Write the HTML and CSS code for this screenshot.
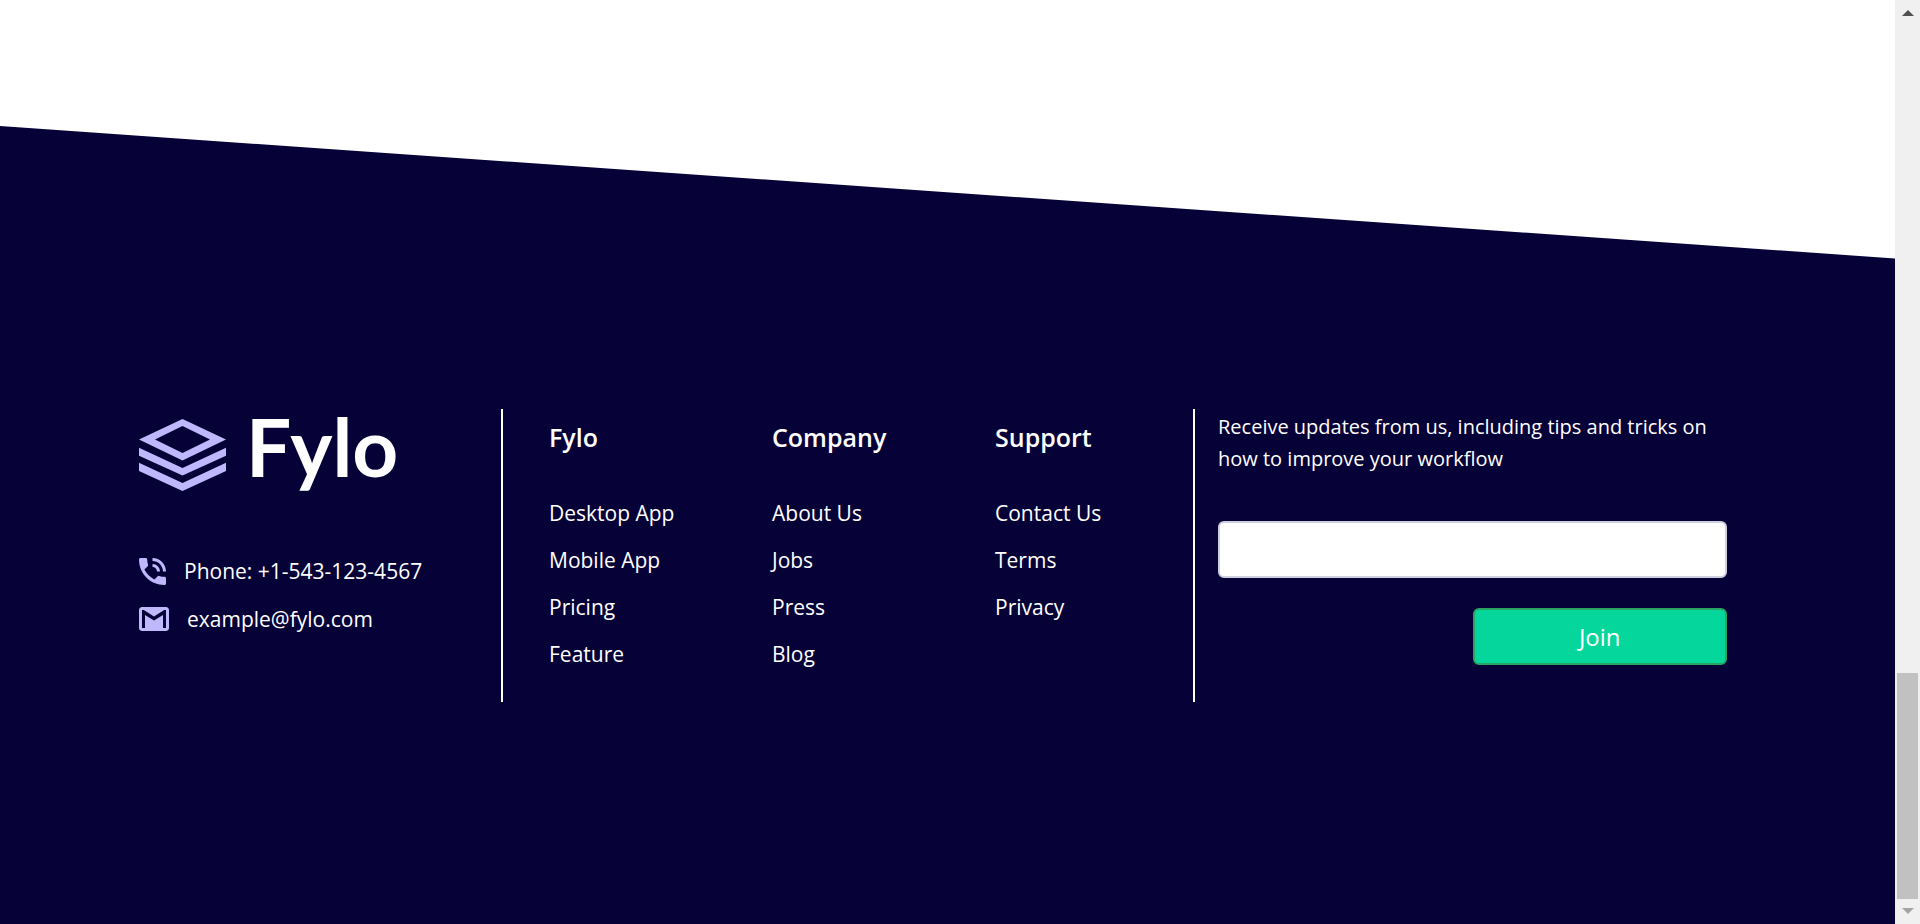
FILE: index.html
```html
<!DOCTYPE html>
<html lang="en">
<head>
<meta charset="utf-8">
<title>Fylo</title>
<link rel="stylesheet" href="styles.css">
</head>
<body>
<div class="page">
  <footer class="footer">
    <div class="footer-grid">
      <section class="brand">
        <div class="logo">
          <svg class="logo-mark" viewBox="0 0 87 72" aria-hidden="true">
            <path fill-rule="evenodd" d="M43.500 0L87 20.500 43.500 41.500 0 20.500zM43.500 7L16 20.500 43.500 34 71 20.500z"/>
            <path d="M0 28.700v8L43.500 56.500 87 36.700v-8L43.500 49zM0 43.700V52l43.500 20L87 52v-8.300L43.500 64z"/>
          </svg>
          <span class="logo-name">Fylo</span>
        </div>
        <p class="contact">
          <svg class="icon-phone" viewBox="0 0 27 27" aria-hidden="true">
            <path d="M25.500 18.800c-1.900 0-3.700-.3-5.300-.9-.5-.2-1.100 0-1.500.4l-3.300 3.300C11.100 19.400 7.600 15.900 5.400 11.600l3.300-3.300c.4-.4.500-1 .4-1.500C8.500 5.200 8.200 3.400 8.200 1.500 8.200.7 7.500 0 6.700 0H1.500C.7 0 0 .7 0 1.500 0 15.600 11.400 27 25.500 27c.8 0 1.500-.7 1.500-1.500v-5.200c0-.8-.7-1.500-1.500-1.500z"/>
            <path d="M24 13.500h3C27 6 21 0 13.500 0v3C19.300 3 24 7.700 24 13.500zM18 13.500h3c0-4.100-3.400-7.500-7.500-7.500v3c2.500 0 4.500 2 4.500 4.500z"/>
          </svg>
          <span>Phone: +1-543-123-4567</span>
        </p>
        <p class="contact">
          <svg class="icon-mail" viewBox="2 4 20 16" aria-hidden="true">
            <path fill-rule="evenodd" d="M20 4H4c-1.100 0-2 .9-2 2v12c0 1.100.9 2 2 2h16c1.100 0 2-.9 2-2V6c0-1.100-.9-2-2-2zM20 18h-2V9.250L12 13 6 9.250V18H4V6h1.200l6.800 4.250L18.800 6H20z"/>
          </svg>
          <span>example@fylo.com</span>
        </p>
      </section>
      <nav class="links" aria-label="Footer">
        <div>
          <h2 class="links-title">Fylo</h2>
          <ul class="links-list">
            <li><a href="#">Desktop App</a></li>
            <li><a href="#">Mobile App</a></li>
            <li><a href="#">Pricing</a></li>
            <li><a href="#">Feature</a></li>
          </ul>
        </div>
        <div>
          <h2 class="links-title">Company</h2>
          <ul class="links-list">
            <li><a href="#">About Us</a></li>
            <li><a href="#">Jobs</a></li>
            <li><a href="#">Press</a></li>
            <li><a href="#">Blog</a></li>
          </ul>
        </div>
        <div>
          <h2 class="links-title">Support</h2>
          <ul class="links-list">
            <li><a href="#">Contact Us</a></li>
            <li><a href="#">Terms</a></li>
            <li><a href="#">Privacy</a></li>
          </ul>
        </div>
      </nav>
      <form class="signup">
        <label class="signup-label" for="email">Receive updates from us, including tips and tricks on how to improve your workflow</label>
        <input class="signup-input" id="email" type="email">
        <button class="signup-button" type="button">Join</button>
      </form>
    </div>
  </footer>
</div>
<div class="scrollbar" aria-hidden="true">
  <svg class="arrow arrow-up" viewBox="0 0 12 6"><path d="M0 6L6 0l6 6z"/></svg>
  <div class="scroll-thumb"></div>
  <svg class="arrow arrow-down" viewBox="0 0 12 6"><path d="M0 0l6 6 6-6z"/></svg>
</div>
</body>
</html>
```
FILE: styles.css
```css
* { box-sizing: border-box; }

body {
  display: flex;
  min-height: 100vh;
  margin: 0;
  background: #fff;
  color: #fff;
  font: 21px/32px "Segoe UI", "Open Sans", sans-serif;
}

.page {
  display: flex;
  flex: 1;
  flex-direction: column;
  padding-top: 126px;
}

.footer {
  flex: 1;
  padding: 283px 168px 100px 139px;
  background: #060137;
  clip-path: polygon(0 0, 100% 6.9vw, 100% 100%, 0 100%);
}

.footer-grid {
  display: grid;
  grid-template-columns: 362fr 694fr 532fr;
}

.logo {
  display: flex;
  align-items: flex-end;
  gap: 20px;
  height: 82px;
  margin-bottom: 64px;
}

.logo-mark { width: 87px; height: 72px; fill: #bfb8fc; }

.logo-name {
  font-family: Lato, sans-serif;
  font-size: 80px;
  font-weight: 700;
  line-height: 90px;
}

.contact {
  display: flex;
  align-items: center;
  gap: 18px;
  margin: 0 0 16px;
}

.icon-phone { width: 27px; height: 27px; fill: #bfb8fc; }
.icon-mail { width: 30px; height: 24px; fill: #bfb8fc; }

.links {
  display: grid;
  grid-template-columns: repeat(3, 1fr);
  column-gap: 25px;
  min-height: 293px;
  padding-left: 46px;
  border: solid #fff;
  border-width: 0 2px;
}

.links-title {
  margin: 10px 0 42px;
  font-size: 25px;
  font-weight: 600;
  line-height: 36px;
}

.links-list {
  display: grid;
  gap: 15px;
  margin: 0;
  padding: 0;
  list-style: none;
}

.links-list a { color: inherit; text-decoration: none; }

.signup {
  display: flex;
  flex-direction: column;
  padding-left: 23px;
}

.signup-label {
  margin: 2px 0 46px;
  font-size: 20px;
}

.signup-input,
.signup-button {
  height: 57px;
  border-radius: 6px;
  font: inherit;
}

.signup-input {
  width: 100%;
  padding: 0 16px;
  border: 2px solid #ced0e0;
  background: #fff;
}

.signup-button {
  align-self: flex-end;
  width: 50%;
  margin-top: 30px;
  border: 2px solid #28a460;
  background: #05d79c;
  color: #fff;
  font-size: 24px;
}

.scrollbar {
  display: flex;
  flex-direction: column;
  align-items: center;
  width: 25px;
  padding: 10px 0;
  background: #f0f0f0;
}

.arrow { width: 12px; height: 6px; }
.arrow-up { margin-bottom: auto; fill: #505050; }
.arrow-down { fill: #a3a3a3; }

.scroll-thumb {
  width: 21px;
  height: 25%;
  margin-bottom: 9px;
  background: #c1c1c1;
}
```
